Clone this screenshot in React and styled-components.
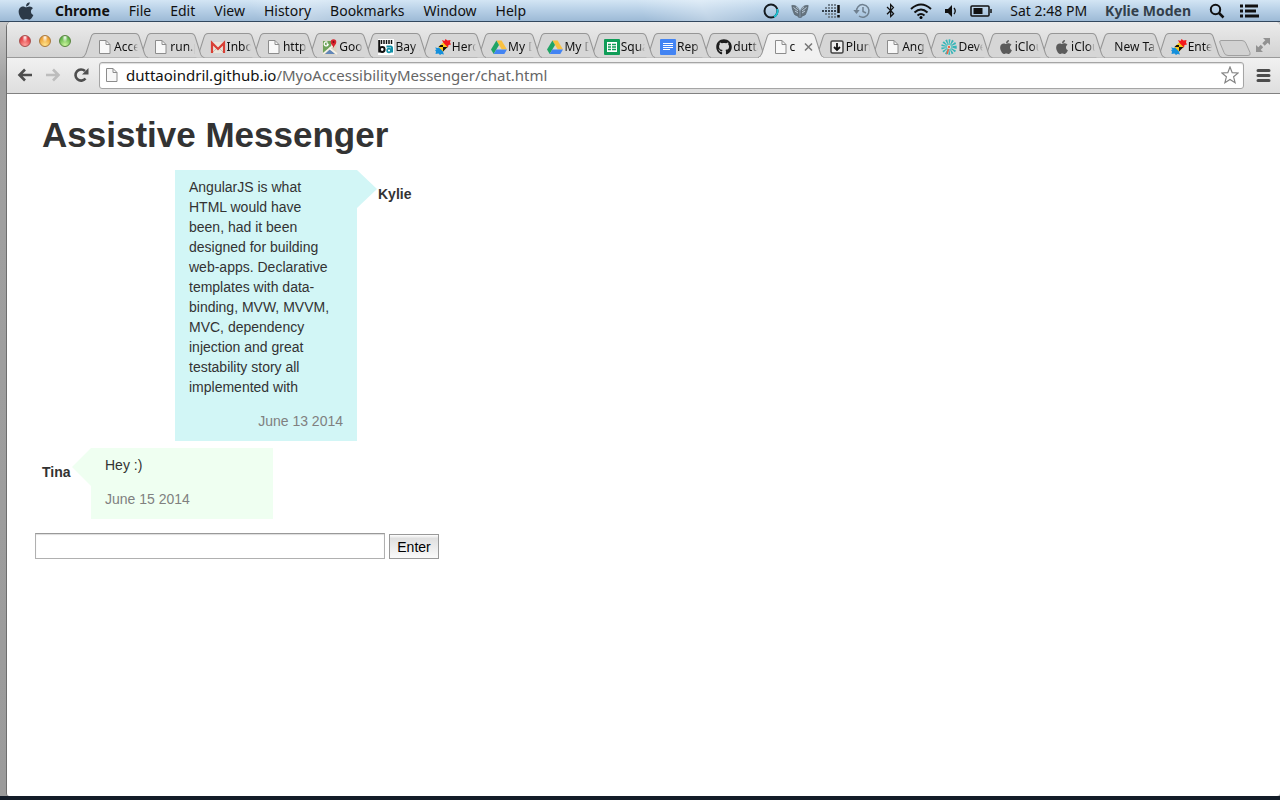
import React, { useState } from 'react'
import styled, { createGlobalStyle } from 'styled-components'
import { FaApple, FaGithub, FaBluetoothB } from 'react-icons/fa'

const uiFont = '"Lucida Grande", "Noto Sans", "Open Sans", sans-serif'
const pageFont = '"Liberation Sans", Arial, sans-serif'

const GlobalStyle = createGlobalStyle`
  * {
    box-sizing: border-box;
  }

  body {
    margin: 0;
    background: #131c28;
  }

  svg {
    display: block;
    flex: none;
  }
`

const Desktop = styled.div`
  min-height: 100vh;
  display: flex;
  flex-direction: column;
  padding-bottom: 4px;
`

const MenuBar = styled.header`
  height: 22px;
  padding: 0 20px 0 16px;
  display: flex;
  align-items: center;
  justify-content: space-between;
  border-bottom: 1px solid #33485f;
  background:
    linear-gradient(60deg, transparent 20%, rgba(255, 255, 255, 0.3) 24%, transparent 30%, transparent 50%, rgba(255, 255, 255, 0.3) 55%, transparent 60%),
    linear-gradient(#d3e5f4, #b6cfe6 50%, #9dbad6);
  color: #111;
  font: 14px/20px ${uiFont};
`

const MenuGroup = styled.nav`
  display: flex;
  align-items: center;
  gap: 19px;
`

const StatusGroup = styled.div`
  display: flex;
  align-items: center;
  gap: ${({ $gap }) => $gap}px;
`

const MenuItem = styled.button`
  padding: 0;
  border: none;
  background: none;
  color: ${({ $muted }) => ($muted ? '#333f4b' : '#111')};
  font: inherit;
  font-weight: ${({ $strong }) => ($strong ? 700 : 400)};
  white-space: nowrap;
`

const Workspace = styled.div`
  flex: 1;
  display: flex;
  padding-left: 6px;
  background: linear-gradient(#c9c9c9, #a0a0a0 60px, #9b9b9b);
`

const BrowserWindow = styled.div`
  flex: 1;
  min-width: 0;
  display: flex;
  flex-direction: column;
  border-left: 1px solid #6e6e6e;
  border-radius: 5px 5px 3px 3px;
  overflow: hidden;
  background: #fff;
`

const TabStrip = styled.div`
  height: 36px;
  display: flex;
  align-items: flex-end;
  background: linear-gradient(#ebebeb, #d2d2d2);
  box-shadow: inset 0 -1px #9a9a9a;
`

const WindowControls = styled.div`
  width: 75px;
  height: 36px;
  padding: 13px 0 0 12px;
  display: flex;
  gap: 8px;
`

const Light = styled.button`
  width: 12px;
  height: 12px;
  padding: 0;
  border: 1px solid ${({ $edge }) => $edge};
  border-radius: 50%;
  background: radial-gradient(ellipse at 50% 15%, #fff 0, transparent 40%),
    radial-gradient(circle at 50% 90%, ${({ $glow }) => $glow}, ${({ $tone }) => $tone} 75%);
`

const Tabs = styled.div`
  flex: 1;
  min-width: 0;
  display: flex;
`

const TabButton = styled.button`
  position: relative;
  z-index: ${({ $order }) => $order};
  flex: 1 1 0;
  min-width: 0;
  height: 25px;
  padding: 2px 0 0 ${({ $bare }) => ($bare ? 19 : 15)}px;
  display: flex;
  align-items: center;
  gap: 1px;
  border: none;
  background: none;
  color: #111;
  font: 12px/16px ${uiFont};
  text-align: left;
`

const TabShape = styled.svg`
  position: absolute;
  z-index: -1;
  top: 0;
  left: 0;
  width: calc(100% + 10px);
  height: 25px;
`

const TabLabel = styled.span`
  flex: 1;
  min-width: 0;
  overflow: hidden;
  white-space: nowrap;
  mask-image: linear-gradient(to left, transparent, #000 7px);
`

const NewTab = styled.button`
  width: 34px;
  height: 25px;
  margin-left: 6px;
  padding: 4px 0 0;
  border: none;
  background: none;
`

const Fullscreen = styled.button`
  height: 36px;
  margin: 0 9px 0 3px;
  padding: 10px 0 0;
  border: none;
  background: none;
`

const Toolbar = styled.div`
  height: 36px;
  padding: 0 8px 1px 4px;
  display: flex;
  align-items: center;
  border-bottom: 1px solid #818181;
  background: linear-gradient(#f1f1f1, #dedede);
`

const ToolButton = styled.button`
  width: 28px;
  padding: 0;
  display: flex;
  justify-content: ${({ $end }) => ($end ? 'flex-end' : 'center')};
  border: none;
  background: none;
`

const AddressBar = styled.div`
  flex: 1;
  min-width: 0;
  height: 27px;
  margin-left: 4px;
  padding: 0 4px;
  display: flex;
  align-items: center;
  border: 1px solid #a5a5a5;
  border-radius: 3px;
  background: #fff;
  box-shadow: inset 0 1px 1px #ddd;
`

const Address = styled.a`
  flex: 1;
  margin-left: 6px;
  color: #666;
  font: 15px/20px ${uiFont};
  text-decoration: none;

  & b {
    color: #111;
    font-weight: 400;
  }
`

const Page = styled.main`
  flex: 1;
  padding: 21px 28px;
  color: #333;
  font: 14px/20px ${pageFont};
`

const Title = styled.h1`
  margin: 0 7px 15px;
  font-size: 35px;
  line-height: 40px;
`

const Conversation = styled.section`
  max-width: 370px;
  margin: 0 7px 14px;
  display: flex;
  flex-direction: column;
  gap: 7px;
`

const Message = styled.article`
  align-self: ${({ $own }) => ($own ? 'flex-end' : 'flex-start')};
  display: flex;
  flex-direction: ${({ $own }) => ($own ? 'row-reverse' : 'row')};
  align-items: flex-start;
  gap: ${({ $own }) => ($own ? 21 : 20)}px;
`

const Author = styled.strong`
  min-width: ${({ $own }) => ($own ? 34 : 29)}px;
  margin-top: 14px;
`

const Bubble = styled.div`
  position: relative;
  width: 182px;
  padding: 7px 14px 10px;
  background: ${({ $own }) => ($own ? '#d2f6f6' : '#effff1')};

  &::before {
    content: '';
    position: absolute;
    top: 0;
    ${({ $own }) => ($own ? 'left: 100%;' : 'right: 100%;')}
    border: 19px solid transparent;
    border-width: 19px 0;
    ${({ $own }) => ($own ? 'border-left: 20px solid #d2f6f6;' : 'border-right: 19px solid #effff1;')}
  }
`

const Copy = styled.p`
  margin: 0 8px 14px 0;
`

const Stamp = styled.time`
  display: block;
  color: #808080;
  text-align: ${({ $own }) => ($own ? 'right' : 'left')};
`

const Composer = styled.form`
  display: flex;
  align-items: flex-end;
  gap: 4px;
`

const MessageInput = styled.input`
  width: 350px;
  height: 26px;
  padding: 2px 4px;
  border: 1px solid #b0b0b0;
  border-top-color: #999;
  border-radius: 0;
  box-shadow: inset 0 1px 1px #ddd;
  font: inherit;
`

const SendButton = styled.button`
  min-width: 50px;
  height: 25px;
  padding: 0 7px;
  border: 1px solid #999;
  background: linear-gradient(#fff, #e0e0e0 15%, #fafafa);
  color: #000;
  font: inherit;
`

const PageIcon = () => (
  <svg width="16" height="16" viewBox="0 0 16 16">
    <path d="M2.5 1.5h6.5l4 4v9H2.5z" fill="#f8f8f8" stroke="#8c8c8c" />
    <path d="M9 1.5v4h4" fill="none" stroke="#8c8c8c" />
  </svg>
)

const MailIcon = () => (
  <svg width="16" height="16" viewBox="0 0 16 16">
    <path d="M1 3h14v11H1z" fill="#e9e5dc" />
    <path d="M3 13l5-5 5 5" fill="none" stroke="#c8c1b4" />
    <path d="M2 14V4l6 6 6-6v10" fill="none" stroke="#d93f35" strokeWidth="2.2" />
  </svg>
)

const MapIcon = () => (
  <svg width="16" height="16" viewBox="0 0 16 16">
    <rect x="0.5" y="1.5" width="14" height="14" rx="1" fill="#d9d3c0" />
    <path d="M1 2h8v5L1 14z" fill="#6ea25a" />
    <path d="M8 10l5 5H3z" fill="#6287b8" />
    <path d="M1 15L13 5M7 9l8 6" stroke="#f5f2e8" strokeWidth="1.6" />
    <path d="M6.200 5H4.600M6.200 5A2 2 0 1 1 5.500 3.400" fill="none" stroke="#fff" strokeWidth="1.300" />
    <path d="M11.500 9C11 6.500 8.700 5.500 8.700 3a2.800 2.800 0 0 1 5.600 0c0 2.500-2.300 3.500-2.800 6z" fill="#d8232a" />
    <circle cx="11.500" cy="3" r="1" fill="#7d1014" />
  </svg>
)

const BayIcon = () => (
  <svg width="16" height="16" viewBox="0 0 16 16">
    <path d="M0 0h16v16H0z" fill="#fff" />
    <path d="M3.500 1v4M6 1v4M8.500 1v4M11 1v4M13.500 1v4" stroke="#111" strokeWidth="1.500" />
    <path d="M1.200 1v12.500" stroke="#111" strokeWidth="2" />
    <circle cx="4.200" cy="10.500" r="2.400" fill="none" stroke="#111" strokeWidth="2" />
    <path d="M8.500 7.500h4q1.500 0 1.500 1.500v4.500" fill="none" stroke="#1391a8" strokeWidth="2" />
    <circle cx="11" cy="11.500" r="1.900" fill="none" stroke="#1391a8" strokeWidth="1.600" />
  </svg>
)

const SparkIcon = () => (
  <svg width="16" height="16" viewBox="0 0 16 16">
    <path d="M7 1l2.500 1L10.500 0l2 1.500L15.500 1 15 3.500l1 2-2.500.5-.5 2.500-3-1z" fill="#f3181c" />
    <path d="M0 8.500l3 .5 2-1.500 3.500 4L8 13l1 2.500-2.500-.5L5 16l-1.500-1.500L.5 15l.5-2.500-1-1.500 1.500-.5z" fill="#1590dc" />
    <path d="M3.500 8L8 3.500 12.500 8 8 12.500z" fill="#f8c51c" />
    <path d="M8 8h4.500L8 12.500zM8 8H3.500l2-2H8z" fill="#111" />
  </svg>
)

const DriveIcon = () => (
  <svg width="16" height="16" viewBox="0 0 16 16">
    <path d="M5.400 1.500h5.200L16 10.500h-5.200z" fill="#f9c140" />
    <path d="M5.400 1.500L8 6 2.700 15 0 10.500z" fill="#20a464" />
    <path d="M5.300 10.500H16L13.300 15H2.700z" fill="#4384f3" />
  </svg>
)

const SheetIcon = () => (
  <svg width="16" height="16" viewBox="0 0 16 16">
    <rect width="16" height="16" rx="1" fill="#109d58" />
    <path d="M3 3h10v10H3z" fill="#fff" />
    <path d="M4 5.500h3M8 5.500h4M4 8h3M8 8h4M4 10.500h3M8 10.500h4" stroke="#109d58" strokeWidth="1.300" />
  </svg>
)

const DocIcon = () => (
  <svg width="16" height="16" viewBox="0 0 16 16">
    <rect width="16" height="16" rx="1" fill="#4384f3" />
    <path d="M3 4.500h10M3 6.500h10M3 8.500h10M3 10.500h7" stroke="#fff" />
  </svg>
)

const PlunkIcon = () => (
  <svg width="16" height="16" viewBox="0 0 16 16">
    <rect x="2" y="2" width="12" height="12" rx="1.500" fill="#eee" stroke="#444" strokeWidth="1.500" />
    <path d="M8 4v7M5 8l3 3 3-3" fill="none" stroke="#111" strokeWidth="1.800" />
  </svg>
)

const BurstIcon = () => (
  <svg width="16" height="16" viewBox="0 0 16 16">
    <circle cx="8" cy="8" r="5.500" fill="none" stroke="#35b5b8" strokeWidth="4.500" strokeDasharray="1.400 1.100" />
    <circle cx="8" cy="8" r="3.700" fill="#6cc4c2" />
    <circle cx="8" cy="8" r="1.900" fill="#f3e9e4" />
    <circle cx="8" cy="8" r="1.200" fill="#ef6544" />
    <path d="M7.500 10l-1.500 5" stroke="#ef6544" strokeWidth="1.500" />
  </svg>
)

const tabs = [
  { label: 'Acce', Icon: PageIcon },
  { label: 'run.p', Icon: PageIcon },
  { label: 'Inbo', Icon: MailIcon },
  { label: 'http', Icon: PageIcon },
  { label: 'Goo', Icon: MapIcon },
  { label: 'Bay A', Icon: BayIcon },
  { label: 'Herc', Icon: SparkIcon },
  { label: 'My D', Icon: DriveIcon },
  { label: 'My D', Icon: DriveIcon },
  { label: 'Squa', Icon: SheetIcon },
  { label: 'Rep', Icon: DocIcon },
  { label: 'dutta', Icon: () => <FaGithub size={16} color="#1c1c1c" /> },
  { label: 'c', Icon: PageIcon, active: true },
  { label: 'Plun', Icon: PlunkIcon },
  { label: 'Ang', Icon: PageIcon },
  { label: 'Deve', Icon: BurstIcon },
  { label: 'iClou', Icon: () => <FaApple size={16} color="#5b5b5b" /> },
  { label: 'iClou', Icon: () => <FaApple size={16} color="#5b5b5b" /> },
  { label: 'New Ta' },
  { label: 'Ente', Icon: SparkIcon },
]

const Tab = ({ label, Icon, active, order }) => (
  <TabButton $order={order} $bare={!Icon}>
    <TabShape viewBox="0 0 66 25" preserveAspectRatio="none">
      <path
        d="M0 24.500C3 23.500 3 22 4 20L9 4Q10 .5 13 .5H53Q56 .5 57 4L62 20Q63 24 66 24.500"
        fill={active ? '#f1f1f1' : '#d6d6d6'}
        stroke="#969696"
      />
      {active && <path d="M1 25h64" stroke="#f1f1f1" strokeWidth="2" />}
    </TabShape>
    {Icon && <Icon />}
    <TabLabel>{label}</TabLabel>
    {active && (
      <svg width="10" height="10" viewBox="0 0 10 10">
        <path d="M1 1.500l7 7M8 1.500l-7 7" stroke="#777" strokeWidth="1.500" />
      </svg>
    )}
  </TabButton>
)

const StatusIcons = () => (
  <StatusGroup $gap={12}>
    <svg width="16" height="16" viewBox="0 0 16 16">
      <circle cx="8" cy="8" r="6.500" fill="none" stroke="#151b20" strokeWidth="2" />
      <path d="M14.200 6A6.500 6.500 0 0 1 11 13.800" fill="none" stroke="#1cc3d4" strokeWidth="2" />
    </svg>
    <svg width="18" height="16" viewBox="0 0 18 16">
      <path d="M8.300 15C7 12 5 13 3.500 11.500 3 10 1.500 8 .8 2.500 4 2 7.500 3.500 8.300 8zM9.700 15c1.300-3 3.300-2 4.800-3.500.5-1.500 2-3.500 2.700-9C14 2 10.500 3.500 9.700 8z" fill="#66747f" stroke="#4e5a64" strokeWidth=".6" />
      <path d="M2.500 4.500L7 8M4 8l3 2M15.500 4.500L11 8M14 8l-3 2M5 3.800L7.500 6M13 3.800L10.500 6" stroke="#c4d5e4" strokeWidth=".9" />
    </svg>
    <svg width="20" height="16" viewBox="0 0 20 16">
      <path d="M1 8h14.500" stroke="#35414d" strokeWidth="2" strokeDasharray="2 1" />
      <path d="M4 5h11M4 11h11M7 2h8M7 14h8" stroke="#73828f" strokeWidth="2" strokeDasharray="2 1" />
      <path d="M17.500 2v8M17.500 12v2.500" stroke="#111" strokeWidth="2.500" />
    </svg>
    <svg width="18" height="16" viewBox="0 0 18 16">
      <path d="M3.500 9A6.300 6.300 0 1 1 6 13M10 4v4.500l3 1.500" fill="none" stroke="#6f8090" strokeWidth="1.500" />
      <path d="M.3 7h6.400L3.500 11z" fill="#6f8090" />
    </svg>
    <FaBluetoothB size={15} />
    <svg width="22" height="16" viewBox="0 0 22 16">
      <path d="M1 6Q11-3 21 6M4.500 9.500Q11 3.500 17.500 9.500M7.500 12.500Q11 9.500 14.500 12.500" fill="none" stroke="#111" strokeWidth="2" />
      <circle cx="11" cy="14.500" r="1.500" />
    </svg>
    <svg width="14" height="16" viewBox="0 0 14 16">
      <path d="M1 6h3l4-4v12l-4-4H1z" fill="#111" />
      <path d="M10 5q2.500 3 0 6" fill="none" stroke="#111" strokeWidth="1.300" />
    </svg>
    <svg width="22" height="16" viewBox="0 0 22 16">
      <rect x="1" y="3" width="18" height="10" rx="1" fill="none" stroke="#111" strokeWidth="1.500" />
      <path d="M3.500 5h9v6h-9z" fill="#111" />
      <path d="M21 6v4" stroke="#111" strokeWidth="1.500" />
    </svg>
  </StatusGroup>
)

const messages = [
  {
    author: 'Kylie',
    own: true,
    date: 'June 13 2014',
    text: 'AngularJS is what HTML would have been, had it been designed for building web-apps. Declarative templates with data-binding, MVW, MVVM, MVC, dependency injection and great testability story all implemented with',
  },
  { author: 'Tina', own: false, date: 'June 15 2014', text: 'Hey :)' },
]

const App = () => {
  const [draft, setDraft] = useState('')

  return (
    <Desktop>
      <GlobalStyle />
      <MenuBar>
        <MenuGroup>
          <FaApple size={20} color="#2c3947" />
          <MenuItem $strong>Chrome</MenuItem>
          {['File', 'Edit', 'View', 'History', 'Bookmarks', 'Window', 'Help'].map((name) => (
            <MenuItem key={name}>{name}</MenuItem>
          ))}
        </MenuGroup>
        <StatusGroup $gap={18}>
          <StatusIcons />
          <MenuItem>Sat 2:48 PM</MenuItem>
          <MenuItem $strong $muted>
            Kylie Moden
          </MenuItem>
          <StatusGroup $gap={15}>
            <svg width="16" height="16" viewBox="0 0 16 16">
              <circle cx="6.500" cy="6.500" r="4.700" fill="none" stroke="#111" strokeWidth="2" />
              <path d="M10 10l4.500 4.500" stroke="#111" strokeWidth="2.500" />
            </svg>
            <svg width="20" height="16" viewBox="0 0 20 16">
              <path d="M0 3h3M5 3h13M0 8h3M5 8h11M0 13h3M5 13h14" stroke="#111" strokeWidth="3" />
            </svg>
          </StatusGroup>
        </StatusGroup>
      </MenuBar>
      <Workspace>
        <BrowserWindow>
          <TabStrip>
            <WindowControls>
              <Light aria-label="Close" $edge="#a8504e" $tone="#e0363b" $glow="#ffa29d" />
              <Light aria-label="Minimize" $edge="#a9793c" $tone="#eb9b2d" $glow="#ffe58e" />
              <Light aria-label="Zoom" $edge="#59853f" $tone="#5bb144" $glow="#ccf69e" />
            </WindowControls>
            <Tabs>
              {tabs.map((tab, i) => (
                <Tab key={i} {...tab} order={tab.active ? 40 : 30 - i} />
              ))}
            </Tabs>
            <NewTab aria-label="New tab">
              <svg width="34" height="18" viewBox="0 0 34 18">
                <path d="M3 1.500h21q3 0 4 3l4 9q1 3-2 3H10q-3 0-4-3L2 4Q1 1.500 3 1.500z" fill="#d2d2d2" stroke="#a0a0a0" />
              </svg>
            </NewTab>
            <Fullscreen aria-label="Full screen">
              <svg width="16" height="16" viewBox="0 0 16 16">
                <path d="M8 1h7v7l-2.300-2.300-3 3-2.400-2.400 3-3zM1 8l2.300 2.300 2.500-2.500 2.400 2.400-2.500 2.500L8 15H1z" fill="#929292" />
              </svg>
            </Fullscreen>
          </TabStrip>
          <Toolbar>
            <ToolButton aria-label="Back">
              <svg width="16" height="16" viewBox="0 0 16 16">
                <path d="M15 8H3M8 2.500L2.500 8 8 13.500" fill="none" stroke="#4e4e4e" strokeWidth="2.600" />
              </svg>
            </ToolButton>
            <ToolButton aria-label="Forward">
              <svg width="16" height="16" viewBox="0 0 16 16">
                <path d="M1 8h12M8 2.500L13.500 8 8 13.500" fill="none" stroke="#bdbdbd" strokeWidth="2.600" />
              </svg>
            </ToolButton>
            <ToolButton aria-label="Reload">
              <svg width="16" height="16" viewBox="0 0 16 16">
                <path d="M12.500 11.500A5.600 5.600 0 1 1 12 4" fill="none" stroke="#4e4e4e" strokeWidth="2.600" />
                <path d="M15.500 1v6.500H9z" fill="#4e4e4e" />
              </svg>
            </ToolButton>
            <AddressBar>
              <PageIcon />
              <Address href="#chat">
                <b>duttaoindril.github.io</b>/MyoAccessibilityMessenger/chat.html
              </Address>
              <svg width="18" height="18" viewBox="0 0 18 18">
                <path d="M9 1l2.200 5.600 6 .4-4.600 3.800 1.500 5.900L9 13.400l-5.100 3.300 1.500-5.900L.8 7l6-.4z" fill="#fff" stroke="#858585" strokeWidth="1.200" />
              </svg>
            </AddressBar>
            <ToolButton $end aria-label="Menu">
              <svg width="16" height="16" viewBox="0 0 16 16">
                <path d="M2 3.500h11M2 8.500h11M2 13.500h11" stroke="#4c4c4c" strokeWidth="3" strokeLinecap="round" />
              </svg>
            </ToolButton>
          </Toolbar>
          <Page>
            <Title>Assistive Messenger</Title>
            <Conversation>
              {messages.map(({ author, own, date, text }) => (
                <Message key={author} $own={own}>
                  <Author $own={own}>{author}</Author>
                  <Bubble $own={own}>
                    <Copy>{text}</Copy>
                    <Stamp $own={own}>{date}</Stamp>
                  </Bubble>
                </Message>
              ))}
            </Conversation>
            <Composer onSubmit={(event) => event.preventDefault()}>
              <MessageInput
                aria-label="Message"
                value={draft}
                onChange={(event) => setDraft(event.target.value)}
              />
              <SendButton type="submit">Enter</SendButton>
            </Composer>
          </Page>
        </BrowserWindow>
      </Workspace>
    </Desktop>
  )
}

export default App
